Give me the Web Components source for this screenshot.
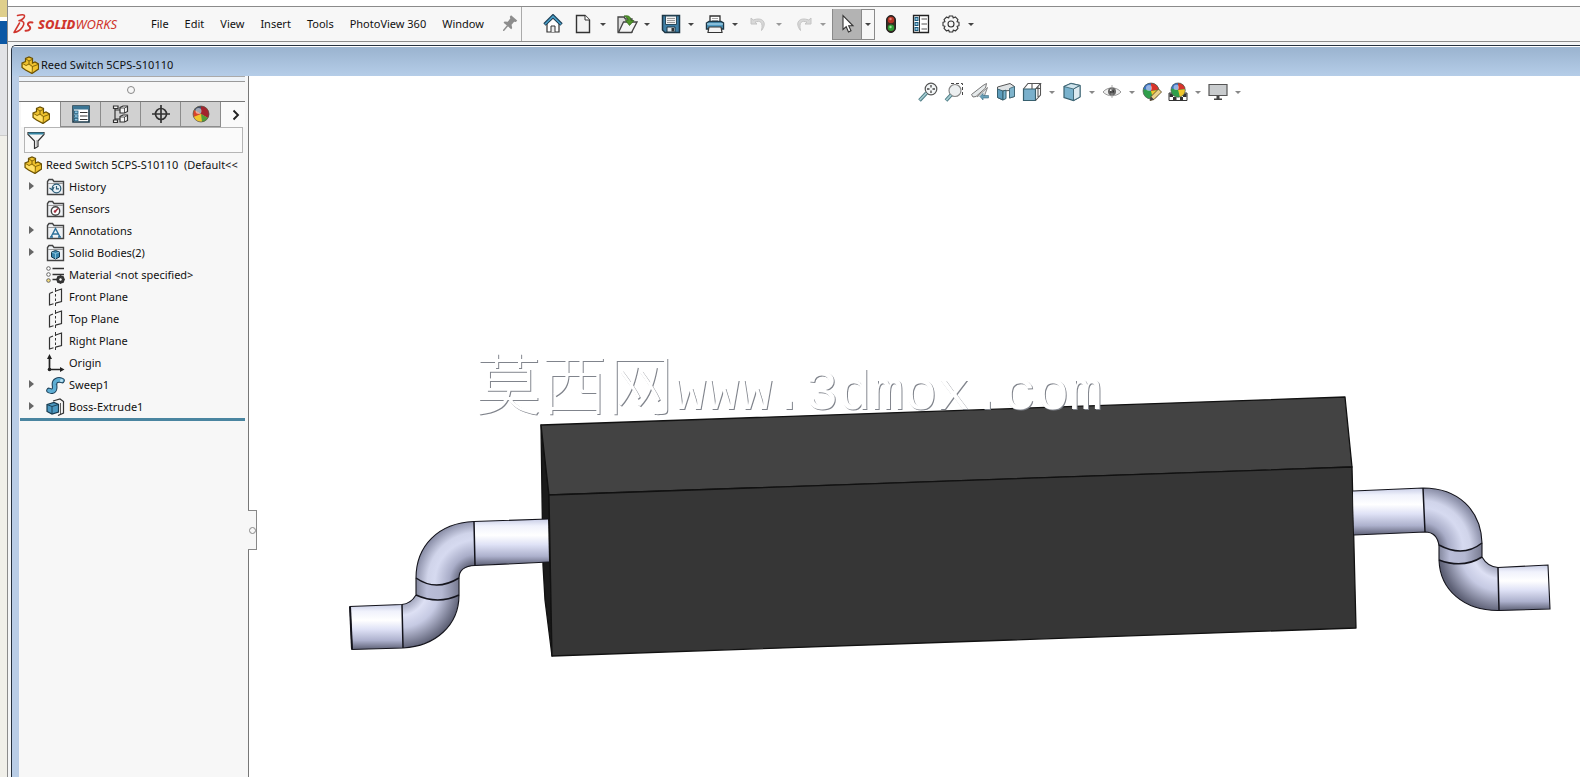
<!DOCTYPE html>
<html lang="en">
<head>
<meta charset="utf-8">
<title>SOLIDWORKS - Reed Switch 5CPS-S10110</title>
<style>
html, body { margin: 0; height: 100%; }
body { font: 11px/20px "Noto Sans", "Open Sans", sans-serif; color: #111; background: #fff; overflow: hidden; }
</style>
</head>
<body>
<sw-app></sw-app>
<script>
const define = (name, html, setup) => {
  const tpl = document.createElement('template');
  tpl.innerHTML = '<style>*{box-sizing:border-box}button{font:inherit;color:inherit;border:0;padding:0;margin:0;background:none}</style>' + html;
  customElements.define(name, class extends HTMLElement {
    constructor() {
      super();
      this.attachShadow({ mode: 'open' }).append(tpl.content.cloneNode(true));
    }
    connectedCallback() { if (setup) setup(this, this.shadowRoot); }
  });
};

const K = 'stroke="#333" fill="none"';
const folder = `<path d="M1.500 16.500V3.500L3 1.500H6.500L8 3.500H17.500V16.500Z" fill="#eef1f4" stroke="#444" stroke-width="1.400"/><path d="M2 5.500H17" stroke="#999"/>`;
const part = `<path d="M1 7L4.500 5.500V2.500L8 1L11.500 2.500V7L14 6L17.500 8V13L11 17.500L4.500 14L1 11.500Z" fill="#f0c22d" stroke="#6b5204" stroke-width="1.200"/><path d="M1.500 7.500L5 9.500L8 8V5L5 3M8 8L11.500 10.500L17 8.500M11.500 10.500L11 17M8 5L11 3.500" stroke="#6b5204" fill="none" stroke-width=".8"/><path d="M2 8.500L5 10.300L8 9L10.500 11.500V16L5 13.200L2 11Z" fill="#ffe06a"/>`;
const plane = `<path d="M3.500 5.500L7 4M9 3.200L15.500 1V13.500L9.500 15.200M7.500 15.800L3.500 17V5.500" ${K} stroke-width="1.200"/><path d="M9.500 0V4M9.500 6V8.500M9.500 10.500V13M9.500 15V18" ${K}/>`;
const ball = `<circle cx="9" cy="9" r="8" fill="#2f9e4b"/><path d="M9 9L1.300 7A8 8 0 0 1 9 1Z" fill="#3c74c8"/><path d="M9 9V1A8 8 0 0 1 16.800 7.500Z" fill="#d8342b"/><path d="M9 9L16.800 8A8 8 0 0 1 11 16.800Z" fill="#f0c62c"/><circle cx="7" cy="6" r="3" fill="#fff" opacity=".45"/><circle cx="9" cy="9" r="8" fill="none" stroke="#555" stroke-width=".7"/>`;
const tabBall = `<circle cx="9" cy="9" r="8" fill="#f0c62c"/><path d="M9 9L2 5A8 8 0 0 1 9 1Z" fill="#44516b"/><path d="M9 9V1A8 8 0 0 1 16 13Z" fill="#a3242e"/><path d="M9 9L2 5A8 8 0 0 0 1.500 12Z" fill="#d8442b"/><path d="M9 9L16 13A8 8 0 0 1 10 17Z" fill="#4f9e3b"/><circle cx="6.500" cy="6" r="3" fill="#fff" opacity=".5"/><circle cx="9" cy="9" r="8" fill="none" stroke="#555" stroke-width=".7"/>`;
const list = `<path d="M1 1H17V17H1Z" fill="#fff" stroke="#1c3a4b" stroke-width="1.600"/>`;
const ICONS = {
  ds: ['26 22', `<g fill="none" stroke="#d0362e" stroke-width="1.500" stroke-linecap="round" stroke-linejoin="round"><path d="M5.500 2.500C9 1.500 13 1 12.500 3.500C12 5.500 9.500 7 7 7.800C12 7.500 13 10 10.500 14C8.500 17 6 19 2 19.500L7.500 10"/><path d="M20.500 9.500C16.500 8.500 14.500 11 17 13C19.500 15 18 18 13.500 17.800" stroke-width="1.900"/></g>`],
  part: ['18 18', part],
  pin: ['18 18', `<g transform="rotate(40 9 9)" fill="#8d8d8d"><path d="M5 1H13V3L11.500 4V8L14 10V11.500H4V10L6.500 8V4L5 3Z"/><path d="M8.300 11H9.700V17.500L9 18L8.300 17.500Z"/></g>`],
  home: ['20 20', `<path d="M4 9.500V18H16V9.500L10 4Z" fill="#fff" stroke="#333" stroke-width="1.200"/><path d="M8 18V12H12V18" fill="#eee" stroke="#333"/><path d="M1.500 10.500L10 2L18.500 10.500" fill="none" stroke="#1d3f57" stroke-width="3.400"/><path d="M2 10.300L10 2.400L18 10.300" fill="none" stroke="#4aa0c9" stroke-width="1.500"/>`],
  new: ['20 20', `<path d="M3.500 1.500H12L16.500 6V18.500H3.500Z" fill="#f2f2f2" stroke="#333" stroke-width="1.400"/><path d="M12 1.500V6H16.500" fill="#fff" stroke="#333"/>`],
  open: ['22 20', `<path d="M2 18V3H8L9.500 5H16V18Z" fill="#ddd" stroke="#444" stroke-width="1.300"/><path d="M2.500 18.500L7.500 8H21L15.500 18.500Z" fill="#f6f6f6" stroke="#444" stroke-width="1.300"/><path d="M8 2C13 1 15 3 14.800 6.500H18L13.500 11.500L9.500 6.500H12C12 4.500 11 3.500 8 2Z" fill="#50962a" stroke="#2c6212" stroke-width=".7"/>`],
  save: ['20 20', `<path d="M1.500 1.500H18.500V18.500H4L1.500 16Z" fill="#3f7fa6" stroke="#1d3645" stroke-width="1.500"/><path d="M4.500 2H15.500V10.500H4.500Z" fill="#f2f2f2" stroke="#2a4a5c"/><path d="M6 4.500H14M6 6.500H14M6 8.500H14" stroke="#999"/><path d="M6 13H14V18H6Z" fill="#dfe7ec" stroke="#1d3645"/><path d="M10.500 14H13V17.500H10.500Z" fill="#333"/>`],
  print: ['20 20', `<path d="M5 8V2H15V8" fill="#fff" stroke="#333" stroke-width="1.300"/><path d="M7 4.500H13M7 6.500H13" stroke="#aaa"/><path d="M1.500 9L4 7.500H16L18.500 9V15H1.500Z" fill="#4e9bc4" stroke="#1d3645" stroke-width="1.400"/><path d="M2 10H18" stroke="#bfe0f0"/><path d="M4 13H16L17 18.500H3Z" fill="#f4f4f4" stroke="#333" stroke-width="1.200"/>`],
  undo: ['20 20', `<path d="M2 4V10H8L6 8.200C11 6 14.500 8 12.500 16.500C18.500 9 14 2.500 4.200 6Z" fill="#d9d9d9" stroke="#c4c4c4"/>`],
  redo: ['20 20', `<path d="M18 4V10H12L14 8.200C9 6 5.500 8 7.500 16.500C1.500 9 6 2.500 15.800 6Z" fill="#d9d9d9" stroke="#c4c4c4"/>`],
  cursor: ['20 20', `<path d="M6 1.500V15.500L9.200 12.700L11.500 18L14 16.800L11.700 11.800H16Z" fill="#fff" stroke="#333" stroke-width="1.100"/>`],
  light: ['20 20', `<rect x="5.500" y="1.500" width="9" height="17" rx="4.500" fill="#3b2a22" stroke="#222"/><circle cx="10" cy="6" r="3.200" fill="#b53426"/><circle cx="9.500" cy="5" r="1.200" fill="#e8867a"/><circle cx="10" cy="13.800" r="3.200" fill="#2f9a35"/><circle cx="9.500" cy="13" r="1.200" fill="#9be29c"/>`],
  options: ['20 20', `<path d="M2.500 1.500H17.500V18.500H2.500Z" fill="#fff" stroke="#222" stroke-width="1.300"/><path d="M8.500 2V18" stroke="#333"/><g fill="#8cc4e0" stroke="#1d5a7c"><rect x="4" y="3.500" width="3" height="3"/><rect x="4" y="8.500" width="3" height="3"/><rect x="4" y="13.500" width="3" height="3"/></g><path d="M10.500 5H16M10.500 10H16M10.500 15H16" stroke="#555" stroke-width="1.200"/>`],
  gear: ['20 20', `<g ${K}><path d="M8.300 2H11.700L12.200 4L14.300 2.900L17 5.600L16 7.700L18 8.300V11.700L16 12.200L17 14.300L14.400 17L12.300 16L11.700 18H8.300L7.700 16L5.600 17L3 14.300L4 12.200L2 11.700V8.300L4 7.700L3 5.600L5.600 3L7.700 4Z" stroke-linejoin="round" stroke-width="1.100"/><circle cx="10" cy="10" r="3" stroke-width="1.100"/></g>`],
  props: ['18 18', list + `<path d="M1 1H17V4.500H1Z" fill="#3b7594"/><g fill="#8cc4e0" stroke="#1c5a7b" stroke-width=".8"><rect x="2.500" y="6" width="3.500" height="2.500"/><rect x="2.500" y="9.800" width="3.500" height="2.500"/><rect x="2.500" y="13.500" width="3.500" height="2.300"/></g><path d="M8 7.500H15.500M8 11H15.500M8 14.500H15.500" stroke="#333" stroke-width="1.200"/>`],
  config: ['18 18', `<g fill="#f4f4f4" stroke="#333" stroke-width="1.200"><path d="M3 1V17M3 5H8M3 14H8" fill="none"/><path d="M1.500 1H6V3.500H1.500ZM1.500 15H5.500V17.500H1.500Z"/><path d="M8 2.500L11 1H15.500V6.500L12.500 8H8Z"/><path d="M8 11.500L11 10H15.500V15.500L12.500 17H8Z"/></g><path d="M8 3L12.500 3L15.500 1.500M12.500 3V8M8 12H12.500L15.500 10.500M12.500 12V17" ${K} stroke-width=".8"/>`],
  target: ['18 18', `<g ${K} stroke-width="1.700"><circle cx="9" cy="9" r="5.500"/><path d="M9 0V18M0 9H18"/></g>`],
  ball: ['18 18', tabBall],
  chevron: ['10 14', `<path d="M2.500 2.500L7 7L2.500 11.500" fill="none" stroke="#222" stroke-width="1.900"/>`],
  filter: ['18 18', `<path d="M1 1.500H17V3.500L11 10V15.500L7.500 17.500V10L1 3.500Z" fill="#f5f5f5" stroke="#333" stroke-width="1.200"/><path d="M1.500 2.500H16.500" stroke="#3586a4" stroke-width="2.200"/><path d="M10 9V15" stroke="#888"/>`],
  history: ['19 18', folder + `<circle cx="10.500" cy="10.500" r="4.300" fill="#e8f2f8" stroke="#2c5d78" stroke-width="1.200"/><path d="M10.500 8V10.800H13M3.500 10L6.500 12L8 9" fill="none" stroke="#2c5d78" stroke-width="1.200"/>`],
  sensors: ['19 18', folder + `<circle cx="9.500" cy="11" r="4.200" fill="#fff" stroke="#444" stroke-width="1.400"/><path d="M9 11.500L12 8.500" stroke="#a03040" stroke-width="1.600"/><circle cx="9" cy="11.500" r="1.300" fill="#a03040"/>`],
  notes: ['19 18', folder + `<path d="M5 15L9.500 6.500L14 15M6.500 12H12.500M4 15H7M12 15H15" fill="none" stroke="#2e719b" stroke-width="1.500"/>`],
  bodies: ['19 18', folder + `<path d="M5.500 8L9.500 6.500L13.500 8V13L9.500 15L5.500 13Z" fill="#3684ac" stroke="#173a4e"/><path d="M5.500 8L9.500 9.500L13.500 8M9.500 9.500V15" fill="none" stroke="#9cd0e8" stroke-width=".8"/>`],
  material: ['19 18', `<g fill="#fff" stroke="#666"><circle cx="2.500" cy="2.500" r="1.800"/><circle cx="2.500" cy="8.500" r="1.800"/><circle cx="2.500" cy="14.500" r="1.800" fill="#f6dd7a"/></g><path d="M6.500 2.500H18M6.500 8.500H18M6.500 13.500H11" stroke="#333" stroke-width="1.700"/><circle cx="14.500" cy="13.500" r="3" fill="none" stroke="#333" stroke-width="2"/><path d="M14.500 9.200V17.800M10.200 13.500H18.800M11.500 10.500L17.500 16.500M17.500 10.500L11.500 16.500" stroke="#333" stroke-width="1.300"/><circle cx="14.500" cy="13.500" r="1.200" fill="#fff"/>`],
  plane: ['19 18', plane],
  origin: ['19 18', `<path d="M3.500 15.500V4M3.500 15.500H16" stroke="#222" stroke-width="1.700"/><path d="M1 5L3.500 0L6 5ZM14 13L18.500 15.500L14 18Z" fill="#222"/><circle cx="3.500" cy="15.500" r="1.800" fill="#222"/>`],
  sweep: ['19 18', `<path d="M3 14.500C9 17 9 12 8.500 9C8 4.500 12 3 16 4.500" fill="none" stroke="#1d3f57" stroke-width="5.600" stroke-linecap="round"/><path d="M3 14.500C9 17 9 12 8.500 9C8 4.500 12 3 16 4.500" fill="none" stroke="#5eaed4" stroke-width="3.600" stroke-linecap="round"/><circle cx="15.500" cy="4.500" r="1.500" fill="#bfe1f0"/>`],
  extrude: ['19 18', `<path d="M7 3L14 1L17.500 3.500V15L12 17.500" fill="#f4f4f4" stroke="#333" stroke-width="1.200"/><path d="M14.500 5V16" ${K} stroke-width=".8"/><path d="M1 6.500L8 4.500L12.500 6.500V14L6 16L1 13.500Z" fill="#4a97c0" stroke="#173a4e" stroke-width="1.200"/><path d="M1 6.500L6 8.500L12.500 6.500M6 8.500V16" fill="none" stroke="#173a4e" stroke-width=".9"/>`],
  fit: ['20 20', `<circle cx="13" cy="7" r="5.800" fill="#f3f6f7" stroke="#555" stroke-width="1.200"/><path d="M13 3V11M9 7H17" stroke="#444" stroke-width="1.300" stroke-dasharray="2.500 3"/><path d="M8.500 11L1.500 18.500" stroke="#4c7b84" stroke-width="3.600"/><path d="M8.500 11L1.800 18" stroke="#a6cdd2" stroke-width="1.800"/>`],
  area: ['20 20', `<path d="M7 1.500H18.500V13" fill="none" stroke="#444" stroke-dasharray="3 2"/><circle cx="11" cy="8.500" r="6" fill="#eceff0" stroke="#888" stroke-width="1.200"/><path d="M7 13L2 18.500" stroke="#4c7b84" stroke-width="3.600"/><path d="M7 13L2.300 18.100" stroke="#a6cdd2" stroke-width="1.800"/>`],
  previous: ['20 20', `<path d="M3 15L1.500 12.500L13 3.500L16.500 1.500L15.500 6L6 14.500Z" fill="#e6eaeb" stroke="#777"/><path d="M7 15L17.500 5.500L14 15" fill="#dfe5e7" stroke="#888"/><path d="M10 14.500L13 11.500V13.500H18.500V16H13V18Z" fill="#69a1b9" stroke="#3c6c84" stroke-width=".6"/>`],
  section: ['20 20', `<path d="M1.500 5L14 1.500L18.500 4.500V14.500L13.500 16V8.500L7 9V18L1.500 15.500Z" fill="#dfe3e5" stroke="#555"/><path d="M1.500 7L7 9V18L1.500 15.500Z" fill="#5c9cbc" stroke="#37606f"/><path d="M7 9L10 8.200V16.500L7 18Z" fill="#78b4cf" stroke="#37606f"/><path d="M13.500 6.500L18.500 4.500V14.500L13.500 16Z" fill="#7fb4cc" stroke="#37606f" stroke-width=".8"/>`],
  orient: ['20 20', `<path d="M1.500 7H13.500V18.500H1.500Z" fill="#7ab0cc" stroke="#37606f" stroke-width="1.200"/><path d="M1.500 7L6 1.500H18.500L13.500 7M18.500 1.500V13L13.500 18.500M10 1.500V7M18.500 6.500H13.500M16 4V15" fill="none" stroke="#555" stroke-width="1.100"/>`],
  display: ['20 20', `<path d="M2 4.500L9 1.500L18 3.500V15L11.500 18.500L2 15.500Z" fill="#79b2cd" stroke="#37606f" stroke-width="1.200"/><path d="M2 4.500L11.500 7L18 3.500L9 1.500Z" fill="#cfe4ed" stroke="#37606f" stroke-width=".8"/><path d="M11.500 7L18 3.500V15L11.500 18.500Z" fill="#dceaf0" stroke="#37606f" stroke-width=".9"/>`],
  eye: ['20 20', `<path d="M1 10C5.500 4.500 14.500 4.500 19 10C14.500 15 5.500 15 1 10Z" fill="#eee" stroke="#999"/><circle cx="10" cy="9.500" r="4" fill="#666"/><circle cx="10" cy="9.500" r="1.800" fill="#222"/><circle cx="8.800" cy="8.200" r="1" fill="#eee"/><path d="M10 3V16" stroke="#999" stroke-width=".8"/>`],
  appearance: ['20 20', ball + `<path d="M8 18.500L9 14.500L16.500 7L19.500 10L12 17.500Z" fill="#e9d28b" stroke="#5c4a2a" stroke-width=".9"/><path d="M8 18.500L9 14.500L12 17.500Z" fill="#444"/>`],
  scene: ['20 20', `<path d="M1 11H19V18.500H1Z" fill="#fff" stroke="#333"/><path d="M1.500 11.500H5V15H1.500ZM15 11.500H18.500V15H15ZM5 15H8.500V18.500H5ZM12 15H15V18.500H12Z" fill="#333"/><g transform="translate(2 0) scale(.9)">${ball}</g>`],
  monitor: ['20 20', `<path d="M1 2.500H19V13.500H1Z" fill="#c9ccce" stroke="#555" stroke-width="1.200"/><path d="M8.500 14H11.500V16.500H14V18H6V16.500H8.500Z" fill="#444"/>`]
};

// <sw-icon name>: one glyph of the set above
define('sw-icon', '<style>:host{display:inline-flex;flex:none}svg{display:block}</style><svg aria-hidden="true"></svg>', (el, r) => {
  const [box, body] = ICONS[el.getAttribute('name')];
  const [w, h] = box.split(' ').map(Number);
  const svg = r.querySelector('svg');
  svg.setAttribute('viewBox', `0 0 ${w} ${h}`);
  svg.setAttribute('width', w);
  svg.setAttribute('height', h);
  svg.innerHTML = body;
});

// toolbar button, with an optional drop-down arrow
define('sw-tool', `<style>
:host{display:flex;align-items:center;flex:none}
button{display:flex;align-items:center;justify-content:center;height:30px}
.main{width:var(--tool-w,24px)}
.drop{width:var(--drop-w,17px);display:none}
:host([menu]) .drop{display:flex}
.drop::before{content:"";border:3px solid transparent;border-top-color:var(--arrow,#444);border-bottom:0}
:host([dim]){--arrow:#999}
:host([active]){border:1px solid #8a8a8a;--tool-w:29px;--drop-w:12px;height:31px}
:host([active]) .main{background:#b3b3b3;border-right:1px solid #8a8a8a}
</style><button class="main"><slot></slot></button><button class="drop"></button>`, (el, r) => {
  r.querySelector('.main').setAttribute('aria-label', el.getAttribute('label'));
  r.querySelector('.drop').setAttribute('aria-label', el.getAttribute('label') + ' menu');
});

define('sw-menubar', `<style>
:host{display:flex;align-items:stretch;height:36px;border:1px solid #8b8b8b;border-width:1px 0;background:#f7f7f7;margin-top:6px;white-space:nowrap}
.brand{display:flex;align-items:center;width:143px;padding-left:4px;color:#d0362e;font:italic 13px/20px "Noto Sans",sans-serif}
.brand b{font-weight:800}
nav{display:flex;align-items:center;gap:16px;padding-right:3px;border-right:1px solid #aaa}
.tools{display:flex;align-items:center;padding-left:19px}
.g{display:flex;gap:3px}
.h{gap:6px}
.s{padding-right:4px}
</style>
<div class="brand"><sw-icon name="ds"></sw-icon><span class="name"><b>SOLID</b>WORKS</span></div>
<nav><button>File</button><button>Edit</button><button>View</button><button>Insert</button><button>Tools</button><button>PhotoView 360</button><button>Window</button><sw-icon name="pin"></sw-icon></nav>
<div class="tools">
<div class="g h"><sw-tool label="Home"><sw-icon name="home"></sw-icon></sw-tool>
<div class="g"><sw-tool menu label="New"><sw-icon name="new"></sw-icon></sw-tool><sw-tool menu label="Open"><sw-icon name="open"></sw-icon></sw-tool><sw-tool menu label="Save"><sw-icon name="save"></sw-icon></sw-tool><sw-tool menu label="Print"><sw-icon name="print"></sw-icon></sw-tool><sw-tool menu dim label="Undo"><sw-icon name="undo"></sw-icon></sw-tool><sw-tool menu dim label="Redo"><sw-icon name="redo"></sw-icon></sw-tool></div></div>
<div class="s"><sw-tool menu active label="Select"><sw-icon name="cursor"></sw-icon></sw-tool></div>
<div class="g h"><sw-tool label="Rebuild"><sw-icon name="light"></sw-icon></sw-tool><sw-tool label="File properties"><sw-icon name="options"></sw-icon></sw-tool><sw-tool menu label="Options"><sw-icon name="gear"></sw-icon></sw-tool></div>
</div>`);

define('sw-tree-item', `<style>
:host{display:flex;align-items:center;height:22px;padding-left:9px;white-space:nowrap}
.tri{width:17px;flex:none;display:flex;align-items:center}
:host([branch]) .tri::before{content:"";border:4px solid transparent;border-left:5px solid #666;border-right:0;margin-bottom:2px}
.glyph{display:flex;margin-right:4px}
:host([root]){padding-left:4px;height:23px}
:host([root]) .tri{display:none}
</style><span class="tri"></span><span class="glyph"></span><slot></slot>`, (el, r) => {
  const icon = document.createElement('sw-icon');
  icon.setAttribute('name', el.getAttribute('icon'));
  r.querySelector('.glyph').replaceChildren(icon);
});

define('sw-feature-panel', `<style>
:host{display:flex;flex-direction:column;width:230px;flex:none;background:#f7f7f7;border-right:1px solid #777;overflow:hidden}
.top{height:6px;background:#eef3f8;border-bottom:1px solid #9a9a9a;border-top:1px solid #aaa;margin-right:3px}
.grip{height:19px;display:flex;align-items:center;justify-content:center;padding:0 6px 4px 0}
.grip::before{content:"";width:6px;height:6px;border:1px solid #888;border-radius:50%}
.tabs{display:flex;height:26px;padding-left:2px;margin-right:3px;border-top:1px solid #777}
.tabs button{width:40px;display:flex;align-items:center;justify-content:center;background:#d1d1d1;border-right:1px solid #8c8c8c;border-bottom:1px solid #8c8c8c}
.tabs .on{background:#fff;border-bottom:0}
.tabs .more{width:auto;flex:1;background:#fafafa;border:0;padding-left:6px}
.filter{display:flex;align-items:center;height:26px;margin:0 5px;padding-left:2px;border:1px solid #b5b5b5;background:#fafafa}
input{flex:1;min-width:0;border:0;background:none;outline:0;font:inherit}
.tree{display:block;border-bottom:3px solid #4a85a0;margin:0 3px 0 1px}
</style>
<div class="top"></div><div class="grip"></div>
<div class="tabs"><button class="on" aria-label="Feature tree"><sw-icon name="part"></sw-icon></button><button aria-label="Properties"><sw-icon name="props"></sw-icon></button><button aria-label="Configurations"><sw-icon name="config"></sw-icon></button><button aria-label="Dimensions"><sw-icon name="target"></sw-icon></button><button aria-label="Display"><sw-icon name="ball"></sw-icon></button><button class="more" aria-label="More tabs"><sw-icon name="chevron"></sw-icon></button></div>
<label class="filter"><sw-icon name="filter"></sw-icon><input type="text" aria-label="Filter"></label>
<div class="tree">
<sw-tree-item root icon="part">Reed Switch 5CPS-S10110&nbsp; (Default&lt;&lt;</sw-tree-item>
<sw-tree-item branch icon="history">History</sw-tree-item>
<sw-tree-item icon="sensors">Sensors</sw-tree-item>
<sw-tree-item branch icon="notes">Annotations</sw-tree-item>
<sw-tree-item branch icon="bodies">Solid Bodies(2)</sw-tree-item>
<sw-tree-item icon="material">Material &lt;not specified&gt;</sw-tree-item>
<sw-tree-item icon="plane">Front Plane</sw-tree-item>
<sw-tree-item icon="plane">Top Plane</sw-tree-item>
<sw-tree-item icon="plane">Right Plane</sw-tree-item>
<sw-tree-item icon="origin">Origin</sw-tree-item>
<sw-tree-item branch icon="sweep">Sweep1</sw-tree-item>
<sw-tree-item branch icon="extrude">Boss-Extrude1</sw-tree-item>
</div>`);

define('sw-viewport', `<style>
:host{display:block;position:relative;flex:1;min-width:0;background:#fff}
.model{display:block;width:100%;height:auto}
.hud{position:absolute;top:1px;left:50%;display:flex;--tool-w:26px;--drop-w:14px;--arrow:#888}
.mark{position:absolute;left:17%;top:266px;font:55px/76px "Liberation Mono","Noto Sans CJK SC",monospace;color:#fff;text-shadow:1px 1px 0 #80848c;white-space:nowrap;display:flex;align-items:baseline}
.mark .cn{font:300 66px/76px "Noto Sans CJK SC",sans-serif}
.handle{position:absolute;left:-1px;top:434px;width:9px;height:40px;background:#f7f7f7;border:1px solid #888;border-left:0;display:flex;align-items:center;justify-content:center}
.handle::before{content:"";width:5px;height:5px;border:1px solid #888;border-radius:50%}
</style>
<svg class="model" viewBox="249 76 1331 701" role="img" aria-label="Reed switch body with two bent leads">
<defs>
<linearGradient id="t" x1="0" y1="0" x2="0" y2="1"><stop offset="0" stop-color="#c8cde6"/><stop offset=".15" stop-color="#f0f2fc"/><stop offset=".35" stop-color="#fff"/><stop offset=".55" stop-color="#dfe2f6"/><stop offset=".8" stop-color="#adb1cd"/><stop offset="1" stop-color="#5d6075"/></linearGradient>
<linearGradient id="b" x1="0" y1="0" x2="1" y2="0"><stop offset="0" stop-color="#84889e"/><stop offset=".25" stop-color="#b9bdd8"/><stop offset=".6" stop-color="#b4b8d2"/><stop offset="1" stop-color="#777a90"/></linearGradient>
<radialGradient id="u1" gradientUnits="userSpaceOnUse" cx="477" cy="582" r="62"><stop offset=".27" stop-color="#5d6075"/><stop offset=".45" stop-color="#a9adc8"/><stop offset=".68" stop-color="#d6daf0"/><stop offset=".8" stop-color="#d0d4ea"/><stop offset="1" stop-color="#8b8fa8"/></radialGradient>
<radialGradient id="u2" gradientUnits="userSpaceOnUse" cx="1421" cy="550" r="62"><stop offset=".27" stop-color="#5d6075"/><stop offset=".45" stop-color="#a9adc8"/><stop offset=".68" stop-color="#d6daf0"/><stop offset=".8" stop-color="#d0d4ea"/><stop offset="1" stop-color="#8b8fa8"/></radialGradient>
<radialGradient id="l1" gradientUnits="userSpaceOnUse" cx="400" cy="588" r="61"><stop offset=".25" stop-color="#9a9eb6"/><stop offset=".45" stop-color="#dde0f4"/><stop offset=".65" stop-color="#c6cae3"/><stop offset="1" stop-color="#5d6075"/></radialGradient>
<radialGradient id="l2" gradientUnits="userSpaceOnUse" cx="1500" cy="551" r="61"><stop offset=".25" stop-color="#9a9eb6"/><stop offset=".45" stop-color="#dde0f4"/><stop offset=".65" stop-color="#c6cae3"/><stop offset="1" stop-color="#5d6075"/></radialGradient>
</defs>
<g stroke="#111" stroke-width="1.300" stroke-linejoin="round">
<path d="M541 425L549 495L552 656L545 600L543 565Z" fill="#1b1b1b"/>
<path d="M541 425L1345 397L1352 467L549 495Z" fill="#434343"/>
<path d="M549 495L1352 467L1356 628L552 656Z" fill="#363636"/>
</g>
<g stroke="none">
<path d="M474 521.500L548 519L549 562L475 565.500Z" fill="url(#t)"/>
<path d="M474 521.500C438 523 416 546 416 578Q438 592 459 578C459 571 464 566 475 565.500Z" fill="url(#u1)"/>
<path d="M416 577Q436 592 459 578V595Q438 605 416 595Z" fill="url(#b)"/>
<path d="M416 595Q438 605 459 595C459 625 436 646 403 648L402 604.500C408 604 413 600 416 595Z" fill="url(#l1)"/>
<path d="M350 606.500L402 604.500L403 648L352 649.500Z" fill="url(#t)"/>
<path d="M1353 491L1423 488L1425 532L1354 535Z" fill="url(#t)"/>
<path d="M1423 488C1458 488 1481 510 1482 543Q1463 558 1439 546C1438 538 1434 532 1425 532Z" fill="url(#u2)"/>
<path d="M1439 545Q1463 558 1482 543V557Q1463 569 1439 560Z" fill="url(#b)"/>
<path d="M1439 560Q1463 569 1482 557C1486 564 1491 567 1498 567.500L1499 610.500C1464 611 1440 590 1439 560Z" fill="url(#l2)"/>
<path d="M1498 567.500L1548 565L1550 609L1499 610.500Z" fill="url(#t)"/>
</g>
<g fill="none" stroke="#14141c" stroke-width="1.100">
<path d="M548 519L474 521.500C438 523 416 546 416 578V595C413 600 408 604 402 604.500L350 606.500L352 649.500L403 648C436 646 459 625 459 595V578C459 571 464 566 475 565.500L549 562"/>
<path d="M474 521.500L475 565.500M416 578Q436 592 459 578M416 595Q438 605 459 595M402 604.500L403 648" stroke-width="1.500"/>
<path d="M1353 491L1423 488C1458 488 1481 510 1482 543V557C1486 564 1491 567 1498 567.500L1548 565L1550 609L1499 610.500C1464 611 1440 590 1439 560V546C1438 538 1434 532 1425 532L1354 535"/>
<path d="M1423 488L1425 532M1439 545Q1463 558 1482 543M1439 560Q1463 569 1482 557M1498 567.500L1499 610.500" stroke-width="1.500"/>
<path d="M350 606.500L352 649.500" stroke-width="2"/>
</g>
</svg>
<div class="mark"><span class="cn">莫西网</span><span>www.3dmox.com</span></div>
<div class="hud"><sw-tool label="Zoom to fit"><sw-icon name="fit"></sw-icon></sw-tool><sw-tool label="Zoom to area"><sw-icon name="area"></sw-icon></sw-tool><sw-tool label="Previous view"><sw-icon name="previous"></sw-icon></sw-tool><sw-tool label="Section view"><sw-icon name="section"></sw-icon></sw-tool><sw-tool menu label="View orientation"><sw-icon name="orient"></sw-icon></sw-tool><sw-tool menu label="Display style"><sw-icon name="display"></sw-icon></sw-tool><sw-tool menu label="Hide or show"><sw-icon name="eye"></sw-icon></sw-tool><sw-tool label="Edit appearance"><sw-icon name="appearance"></sw-icon></sw-tool><sw-tool menu label="Apply scene"><sw-icon name="scene"></sw-icon></sw-tool><sw-tool menu label="View settings"><sw-icon name="monitor"></sw-icon></sw-tool></div>
<div class="handle"></div>`);

define('sw-document', `<style>
:host{display:flex;flex-direction:column;flex:1;min-height:0;margin:3px 0 0 3px;border:1px solid #26313f;border-width:1px 0 0 1px;border-radius:5px 0 0 0;background:#b9cde6;overflow:hidden}
header{display:flex;align-items:center;gap:2px;height:30px;padding:6px 0 0 9px;border-top:1px solid #fff;background:linear-gradient(#9ab3cf,#b5cde8)}
.body{display:flex;flex:1;min-height:0;padding-left:7px}
</style><header><sw-icon name="part"></sw-icon><slot name="title"></slot></header><div class="body"><slot></slot></div>`);

define('sw-app', `<style>
:host{display:flex;height:100vh}
.behind{display:flex;flex-direction:column;width:8px;flex:none;border-right:1px solid #8b8b8b;background:#f0efe9}
.behind i{height:17px;background:#dfcf8c}
.behind i+i{height:4px;background:#fff}
.behind i+i+i{height:23px;background:#0b57a4}
.behind i+i+i+i{height:92px;background:#e2e3e6;border-bottom:1px solid #ccc}
.win{display:flex;flex-direction:column;flex:1;min-width:0;background:#fff}
main{display:flex;flex-direction:column;flex:1;min-height:0;background:#f4f5f6}
</style>
<div class="behind"><i></i><i></i><i></i><i></i></div>
<div class="win"><sw-menubar></sw-menubar><main><sw-document><span slot="title">Reed Switch 5CPS-S10110</span><sw-feature-panel></sw-feature-panel><sw-viewport></sw-viewport></sw-document></main></div>`);
</script>
</body>
</html>
